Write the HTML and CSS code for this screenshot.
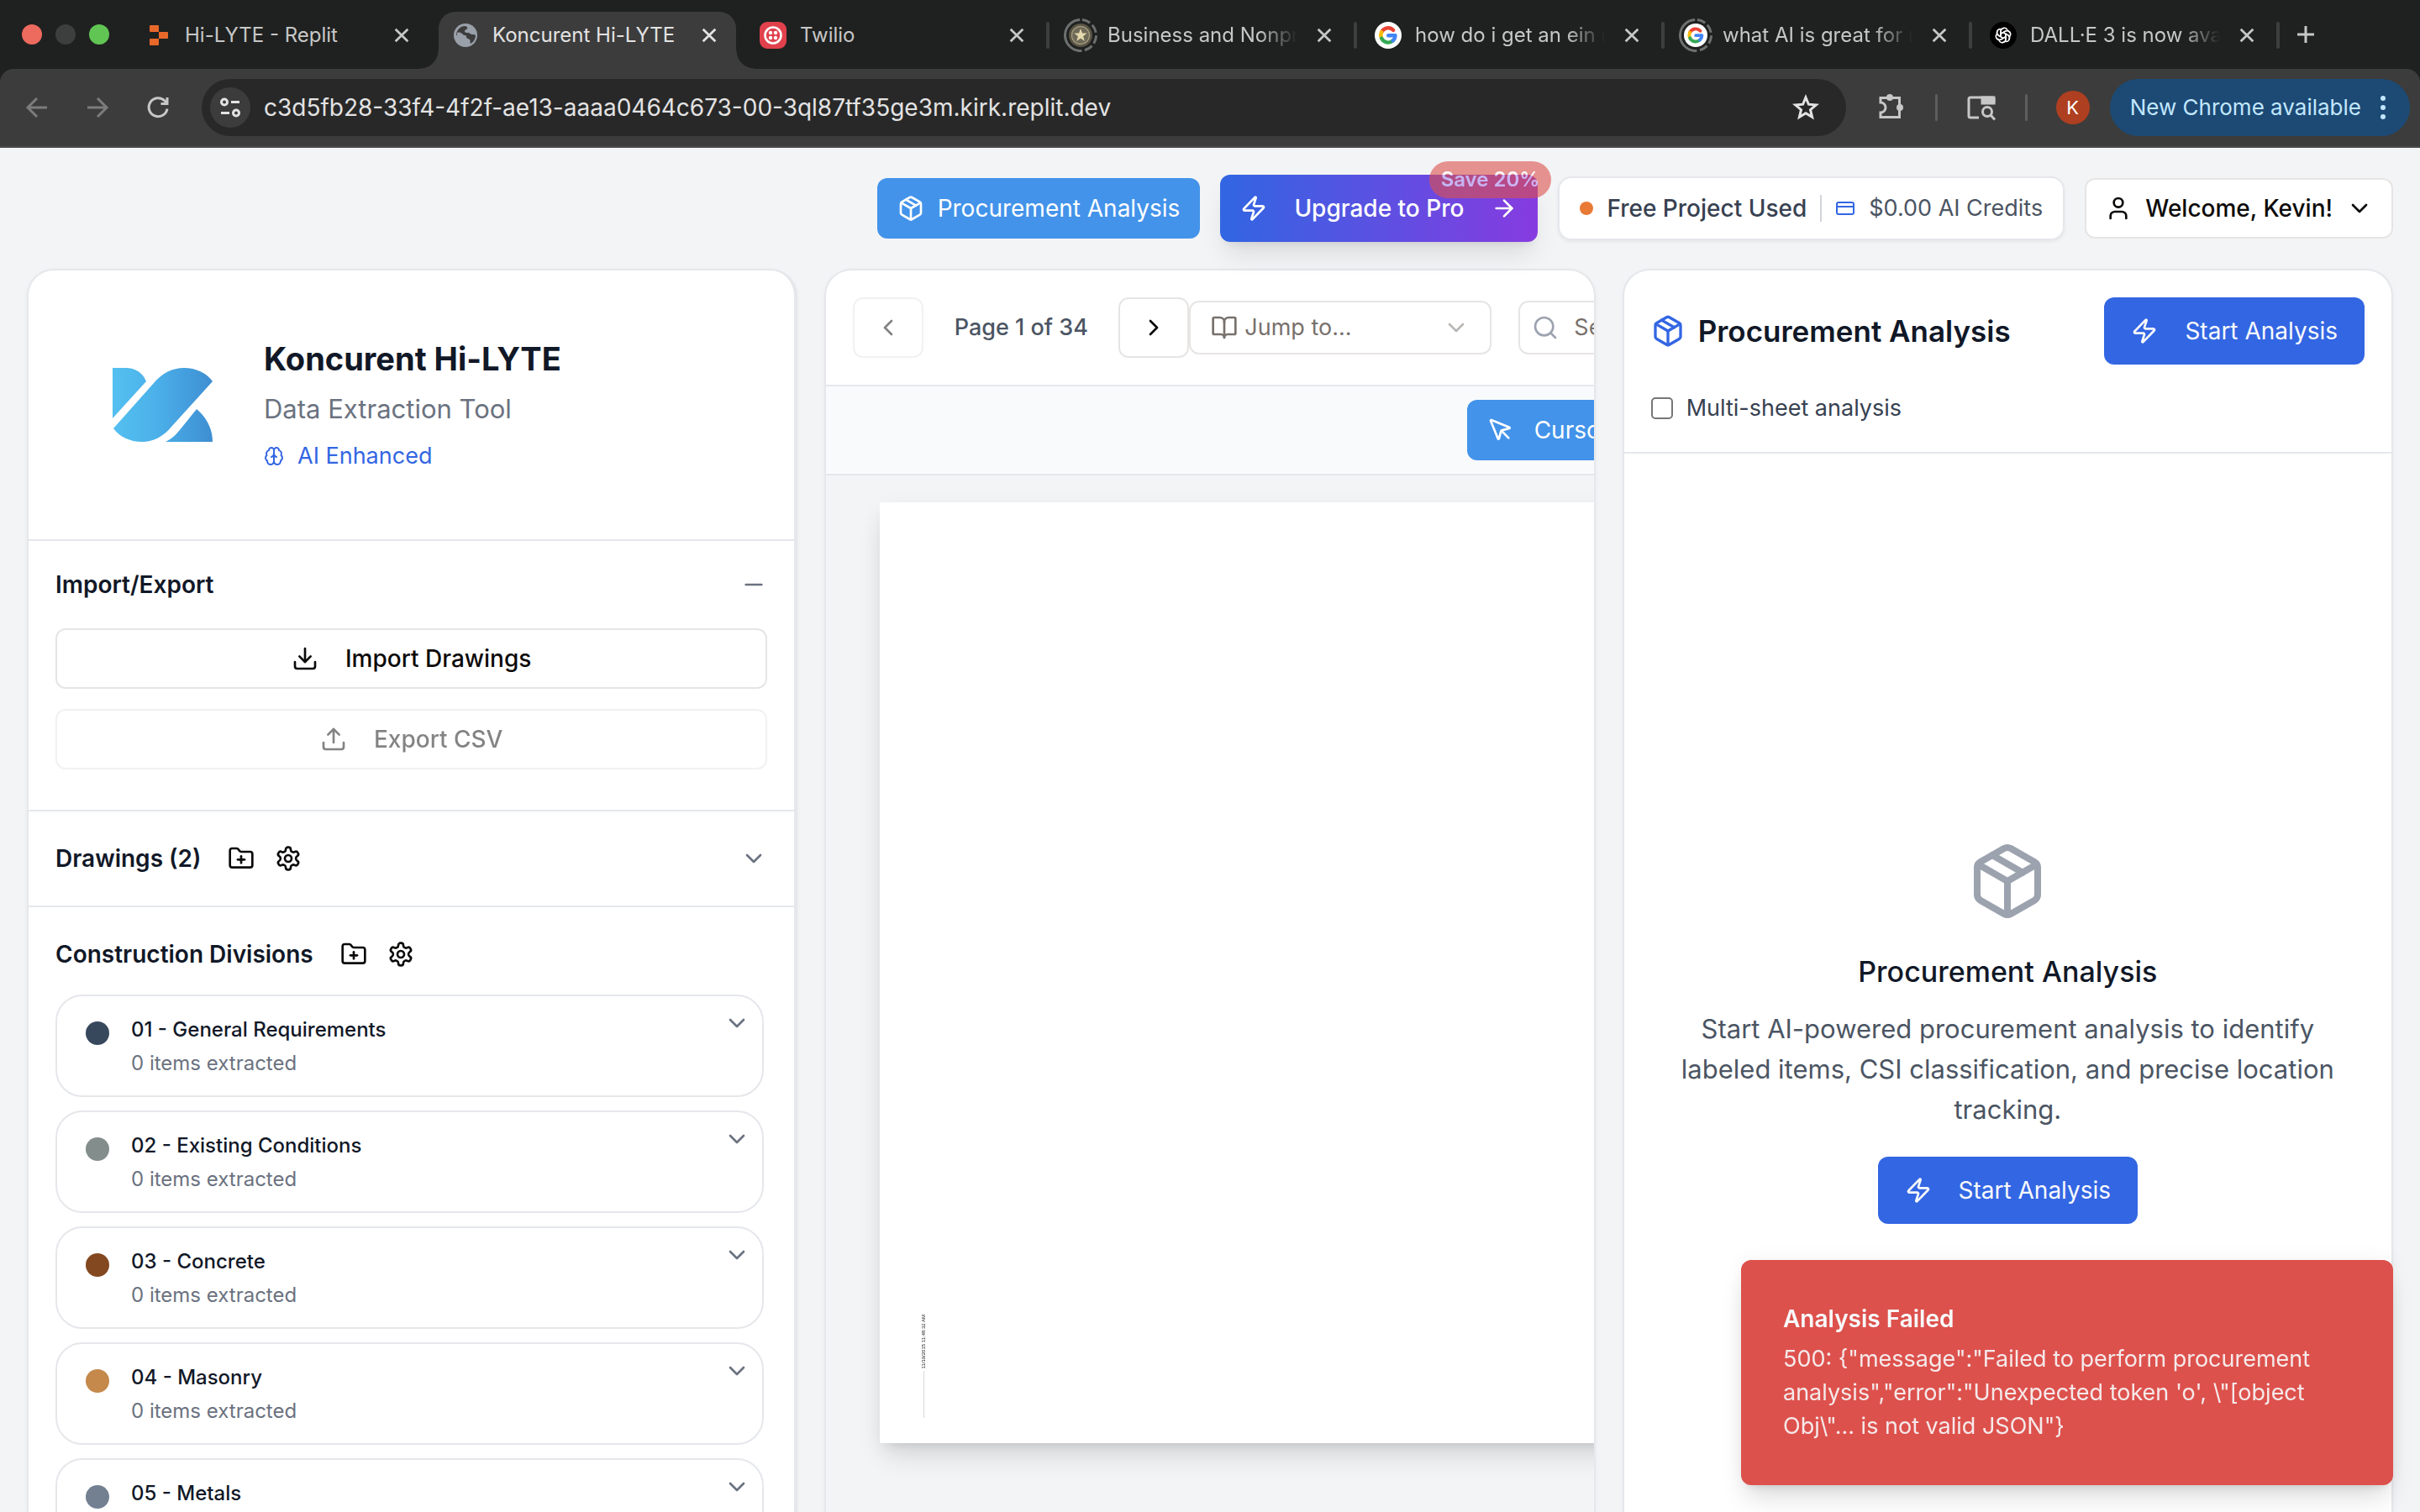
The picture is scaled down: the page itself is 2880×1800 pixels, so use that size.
FILE: index.html
```html
<!DOCTYPE html>
<html lang="en">
<head>
<meta charset="utf-8">
<title>Koncurent Hi-LYTE</title>
<link rel="stylesheet" href="styles.css">
</head>
<body>
<svg class="sprite" aria-hidden="true">
  <symbol id="package" viewBox="0 0 24 24"><path d="M11 21.73a2 2 0 0 0 2 0l7-4A2 2 0 0 0 21 16V8a2 2 0 0 0-1-1.73l-7-4a2 2 0 0 0-2 0l-7 4A2 2 0 0 0 3 8v8a2 2 0 0 0 1 1.73z"/><path d="M12 22V12"/><path d="m3.3 7 8.7 5 8.7-5"/><path d="m7.5 4.27 9 5.15"/></symbol>
  <symbol id="zap" viewBox="0 0 24 24"><path d="M4 14a1 1 0 0 1-.78-1.63l9.9-10.2a.5.5 0 0 1 .86.46l-1.92 6.02A1 1 0 0 0 13 10h7a1 1 0 0 1 .78 1.63l-9.9 10.2a.5.5 0 0 1-.86-.46l1.92-6.02A1 1 0 0 0 11 14z"/></symbol>
  <symbol id="arrow-right" viewBox="0 0 24 24"><path d="M5 12h14"/><path d="m12 5 7 7-7 7"/></symbol>
  <symbol id="card" viewBox="0 0 24 24"><rect width="20" height="14" x="2" y="5" rx="2"/><path d="M2 10h20"/></symbol>
  <symbol id="user" viewBox="0 0 24 24"><path d="M19 21v-2a4 4 0 0 0-4-4H9a4 4 0 0 0-4 4v2"/><circle cx="12" cy="7" r="4"/></symbol>
  <symbol id="chevron-down" viewBox="0 0 24 24"><path d="m6 9 6 6 6-6"/></symbol>
  <symbol id="chevron-left" viewBox="0 0 24 24"><path d="m15 18-6-6 6-6"/></symbol>
  <symbol id="chevron-right" viewBox="0 0 24 24"><path d="m9 18 6-6-6-6"/></symbol>
  <symbol id="minus" viewBox="0 0 24 24"><path d="M5 12h14"/></symbol>
  <symbol id="download" viewBox="0 0 24 24"><path d="M21 15v4a2 2 0 0 1-2 2H5a2 2 0 0 1-2-2v-4"/><path d="m7 10 5 5 5-5"/><path d="M12 15V3"/></symbol>
  <symbol id="upload" viewBox="0 0 24 24"><path d="M21 15v4a2 2 0 0 1-2 2H5a2 2 0 0 1-2-2v-4"/><path d="m17 8-5-5-5 5"/><path d="M12 3v12"/></symbol>
  <symbol id="folder-plus" viewBox="0 0 24 24"><path d="M12 10v6"/><path d="M9 13h6"/><path d="M20 20a2 2 0 0 0 2-2V8a2 2 0 0 0-2-2h-7.9a2 2 0 0 1-1.69-.9L9.6 3.9A2 2 0 0 0 7.93 3H4a2 2 0 0 0-2 2v13a2 2 0 0 0 2 2Z"/></symbol>
  <symbol id="settings" viewBox="0 0 24 24"><path d="M12.22 2h-.44a2 2 0 0 0-2 2v.18a2 2 0 0 1-1 1.73l-.43.25a2 2 0 0 1-2 0l-.15-.08a2 2 0 0 0-2.73.73l-.22.38a2 2 0 0 0 .73 2.73l.15.1a2 2 0 0 1 1 1.72v.51a2 2 0 0 1-1 1.74l-.15.09a2 2 0 0 0-.73 2.73l.22.38a2 2 0 0 0 2.73.73l.15-.08a2 2 0 0 1 2 0l.43.25a2 2 0 0 1 1 1.73V20a2 2 0 0 0 2 2h.44a2 2 0 0 0 2-2v-.18a2 2 0 0 1 1-1.73l.43-.25a2 2 0 0 1 2 0l.15.08a2 2 0 0 0 2.73-.73l.22-.39a2 2 0 0 0-.73-2.73l-.15-.08a2 2 0 0 1-1-1.74v-.5a2 2 0 0 1 1-1.74l.15-.09a2 2 0 0 0 .73-2.73l-.22-.38a2 2 0 0 0-2.73-.73l-.15.08a2 2 0 0 1-2 0l-.43-.25a2 2 0 0 1-1-1.73V4a2 2 0 0 0-2-2z"/><circle cx="12" cy="12" r="3"/></symbol>
  <symbol id="brain" viewBox="0 0 24 24"><path d="M12 5a3 3 0 1 0-5.997.125 4 4 0 0 0-2.526 5.77 4 4 0 0 0 .556 6.588A4 4 0 1 0 12 18Z"/><path d="M12 5a3 3 0 1 1 5.997.125 4 4 0 0 1 2.526 5.77 4 4 0 0 1-.556 6.588A4 4 0 1 1 12 18Z"/><path d="M15 13a4.5 4.5 0 0 1-3-4 4.5 4.5 0 0 1-3 4"/></symbol>
  <symbol id="book" viewBox="0 0 24 24"><path d="M12 7v14"/><path d="M3 18a1 1 0 0 1-1-1V4a1 1 0 0 1 1-1h5a4 4 0 0 1 4 4 4 4 0 0 1 4-4h5a1 1 0 0 1 1 1v13a1 1 0 0 1-1 1h-6a3 3 0 0 0-3 3 3 3 0 0 0-3-3z"/></symbol>
  <symbol id="search" viewBox="0 0 24 24"><circle cx="11" cy="11" r="8"/><path d="m21 21-4.3-4.3"/></symbol>
  <symbol id="pointer" viewBox="0 0 24 24"><path d="M12.586 12.586 19 19"/><path d="M3.688 3.037a.497.497 0 0 0-.651.651l6.5 15.999a.501.501 0 0 0 .947-.062l1.569-6.083a2 2 0 0 1 1.448-1.479l6.124-1.579a.5.5 0 0 0 .063-.947z"/></symbol>
  <symbol id="close" viewBox="0 0 24 24"><path d="m4 4 16 16M20 4 4 20"/></symbol>
  <symbol id="google" viewBox="0 0 32 32"><circle cx="16" cy="16" r="16" fill="#fff" stroke="none"/><g fill="none" stroke-width="4.4"><path stroke="#ea4335" d="M8.2 12.2A8.6 8.6 0 0 1 22.2 10"/><path stroke="#fbbc05" d="M8.2 19.8a8.6 8.6 0 0 1 0-7.6"/><path stroke="#34a853" d="M21.6 22.4a8.6 8.6 0 0 1-13.4-2.6"/><path stroke="#4285f4" d="M16.2 16.2h8.3a8.6 8.6 0 0 1-2.9 6.2"/></g></symbol>
  <symbol id="sleep-ring" viewBox="0 0 40 40"><circle cx="20" cy="20" r="18.5" fill="none" stroke="#6d706f" stroke-width="3" stroke-linecap="butt" stroke-dasharray="10 3.6 10 3.6 10 3.6 10 3.6 58.2 3.6" transform="rotate(-84 20 20)"/></symbol>
</svg>

<div class="browser">
  <nav class="tabstrip" aria-label="Tabs">
    <div class="lights"><i class="light light-red"></i><i class="light light-grey"></i><i class="light light-green"></i></div>
    <div class="tab">
      <svg class="favicon" viewBox="0 0 32 32"><path fill="#e8682a" d="M7 4h9a1 1 0 0 1 1 1v7H7a1 1 0 0 1-1-1V5a1 1 0 0 1 1-1zM17 12h10a1 1 0 0 1 1 1v6a1 1 0 0 1-1 1H17zM7 20h10v7a1 1 0 0 1-1 1H7a1 1 0 0 1-1-1v-6a1 1 0 0 1 1-1z"/></svg>
      <button class="tab-title">Hi-LYTE - Replit</button>
      <button class="tab-close" aria-label="Close tab"><svg class="i22"><use href="#close"/></svg></button>
    </div>
    <div class="tab tab-active">
      <svg class="favicon" viewBox="0 0 32 32"><circle cx="16" cy="16" r="14" fill="#9aa0a9"/><path fill="#3c3c3c" d="M14 5c3 0 5 1 4 3s-3 1-3 3 2 2 4 2 3 2 5 2 3 0 4 1a12 12 0 0 1-6 10c-1-1 0-4-1-5s-4-1-4-3-1-2-3-2H5a11 11 0 0 1 9-11z"/><path fill="#9aa0a9" d="M6 13c3-1 5 0 7 2s3 2 3 4-3 2-3 5l-1 4-6-6z"/></svg>
      <button class="tab-title">Koncurent Hi-LYTE</button>
      <button class="tab-close" aria-label="Close tab"><svg class="i22"><use href="#close"/></svg></button>
    </div>
    <div class="tab">
      <svg class="favicon" viewBox="0 0 32 32"><rect width="32" height="32" rx="9" fill="#e0414c"/><circle cx="16" cy="16" r="9.5" fill="none" stroke="#fff" stroke-width="2.6"/><g fill="#fff"><circle cx="13" cy="13" r="2.2"/><circle cx="19" cy="13" r="2.2"/><circle cx="13" cy="19" r="2.2"/><circle cx="19" cy="19" r="2.2"/></g></svg>
      <button class="tab-title">Twilio</button>
      <button class="tab-close" aria-label="Close tab"><svg class="i22"><use href="#close"/></svg></button>
    </div>
    <div class="tab tab-divided">
      <span class="favicon favicon-asleep"><svg class="ring"><use href="#sleep-ring"/></svg><svg class="i28" viewBox="0 0 28 28"><circle cx="14" cy="14" r="14" fill="#595445"/><circle cx="14" cy="14" r="10.5" fill="#6f6a58" stroke="#a49c80" stroke-width="1.5" stroke-dasharray="2 1.4"/><path fill="#e4d9ac" d="m14 6 2 5.600h5.600l-4.500 3.600 1.700 5.800-4.800-3.500L9.200 21l1.700-5.800-4.500-3.600H12z"/></svg></span>
      <button class="tab-title">Business and Nonprofit</button>
      <button class="tab-close" aria-label="Close tab"><svg class="i22"><use href="#close"/></svg></button>
    </div>
    <div class="tab tab-divided">
      <svg class="favicon"><use href="#google"/></svg>
      <button class="tab-title">how do i get an ein n</button>
      <button class="tab-close" aria-label="Close tab"><svg class="i22"><use href="#close"/></svg></button>
    </div>
    <div class="tab tab-divided">
      <span class="favicon favicon-asleep"><svg class="ring"><use href="#sleep-ring"/></svg><svg class="i28"><use href="#google"/></svg></span>
      <button class="tab-title">what AI is great for m</button>
      <button class="tab-close" aria-label="Close tab"><svg class="i22"><use href="#close"/></svg></button>
    </div>
    <div class="tab tab-divided">
      <svg class="favicon" viewBox="0 0 32 32"><circle cx="16" cy="16" r="16" fill="#000"/><g fill="none" stroke="#fff" stroke-width="1.5"><path id="petal" d="M13 17.600v-6.100a4.200 4.200 0 0 1 7.800-2.100M13 14.300l5.400-3.100a4.200 4.200 0 0 1 5.500 1.300"/><use href="#petal" transform="rotate(60 16 16)"/><use href="#petal" transform="rotate(120 16 16)"/><use href="#petal" transform="rotate(180 16 16)"/><use href="#petal" transform="rotate(240 16 16)"/><use href="#petal" transform="rotate(300 16 16)"/></g></svg>
      <button class="tab-title">DALL·E 3 is now available</button>
      <button class="tab-close" aria-label="Close tab"><svg class="i22"><use href="#close"/></svg></button>
    </div>
    <div class="tab-divided new-tab"><button class="tab-close" aria-label="New tab"><svg class="i24" viewBox="0 0 24 24"><path d="M12 2v20M2 12h20"/></svg></button></div>
  </nav>

  <div class="toolbar">
    <div class="nav-buttons">
      <button class="nav-off" aria-label="Back"><svg class="i32" viewBox="0 0 32 32"><path d="M28 16H5M16 5 5 16l11 11"/></svg></button>
      <button class="nav-off" aria-label="Forward"><svg class="i32" viewBox="0 0 32 32"><path d="M4 16h23M16 5l11 11-11 11"/></svg></button>
      <button aria-label="Reload"><svg class="i32" viewBox="0 0 32 32"><path d="M27 17.500A11 11 0 1 1 24 8l3 3M27 4v7.500h-7.500"/></svg></button>
    </div>
    <div class="omnibox">
      <button class="site-info" aria-label="Site information"><svg class="i32" viewBox="0 0 32 32"><circle cx="9" cy="9.500" r="3.500"/><path d="M17 9.500h10M5 22.500h10"/><circle cx="23" cy="22.500" r="3.500"/></svg></button>
      <input class="url" aria-label="Address" value="c3d5fb28-33f4-4f2f-ae13-aaaa0464c673-00-3ql87tf35ge3m.kirk.replit.dev">
      <button aria-label="Bookmark"><svg class="i32" viewBox="0 0 32 32"><path d="m16 4 3.400 8.200 8.900.700-6.800 5.800 2.100 8.700L16 22.800l-7.600 4.600 2.100-8.700-6.800-5.800 8.900-.700z"/></svg></button>
    </div>
    <div class="extensions">
      <button aria-label="Extensions"><svg class="i36" viewBox="0 0 36 36"><path d="M5 6.500h22.500v23H5v-5.500a6 6 0 0 0 0-12z"/><g fill="currentColor" stroke="none"><circle cx="16" cy="6" r="4"/><circle cx="28" cy="18" r="4"/></g></svg></button>
      <i class="bar-sep"></i>
      <button aria-label="Search tabs"><svg class="i36" viewBox="0 0 36 36"><path d="M15 30H5a2 2 0 0 1-2-2V8a2 2 0 0 1 2-2h26a2 2 0 0 1 2 2v5"/><path d="M19 6h14v7H19z" fill="currentColor"/><circle cx="25" cy="23" r="5.500"/><path d="m29 27 5 5.500"/></svg></button>
      <i class="bar-sep"></i>
      <button class="avatar" aria-label="Profile">K</button>
    </div>
    <button class="update">New Chrome available<svg class="dots" viewBox="0 0 8 32"><circle cx="4" cy="5" r="3"/><circle cx="4" cy="16" r="3"/><circle cx="4" cy="27" r="3"/></svg></button>
  </div>
</div>

<header class="app-header">
  <button class="btn btn-sky"><svg class="i32"><use href="#package"/></svg>Procurement Analysis</button>
  <button class="btn btn-upgrade"><svg class="i32"><use href="#zap"/></svg>Upgrade to Pro<svg class="i32"><use href="#arrow-right"/></svg><span class="save">Save 20%</span></button>
  <div class="status">
    <i class="status-dot"></i><span class="status-plan">Free Project Used</span><i class="status-sep"></i>
    <svg class="i24 blue"><use href="#card"/></svg><span>$0.00 AI Credits</span>
  </div>
  <button class="btn btn-outline account"><svg class="i32"><use href="#user"/></svg>Welcome, Kevin!<svg class="i32"><use href="#chevron-down"/></svg></button>
</header>

<main class="workspace">
  <aside class="panel side">
    <div class="brand">
      <svg class="brand-logo" viewBox="0 0 216 216"><defs><linearGradient id="logo" gradientUnits="userSpaceOnUse" x1="68" y1="0" x2="187" y2="0"><stop offset="0" stop-color="#54c0f0"/><stop offset=".45" stop-color="#4bb0e9"/><stop offset="1" stop-color="#3e8ed2"/></linearGradient></defs><g fill="url(#logo)"><path d="M68 64h16c11 0 20 6 24 16L68 124z"/><path d="m69 136 48-54c10-12 22-18 36-18 14 0 27 6 34 16l-49 54c-9 11-21 18-35 18-14 0-27-6-34-16z"/><path d="M168 113c12 10 19 24 19 39h-56c6-3 11-7 16-13z"/></g></svg>
      <div class="brand-text">
        <h1>Koncurent Hi-LYTE</h1>
        <p class="tagline">Data Extraction Tool</p>
        <p class="ai"><svg class="i24"><use href="#brain"/></svg>AI Enhanced</p>
      </div>
    </div>
    <section class="section import">
      <div class="section-head"><h2>Import/Export</h2><button class="toggle" aria-label="Collapse"><svg class="i32"><use href="#minus"/></svg></button></div>
      <button class="btn btn-outline wide"><svg class="i32"><use href="#download"/></svg>Import Drawings</button>
      <button class="btn btn-outline wide" disabled><svg class="i32"><use href="#upload"/></svg>Export CSV</button>
    </section>
    <section class="section drawings">
      <div class="section-head"><h2>Drawings (2)</h2><button aria-label="Add folder"><svg class="i32"><use href="#folder-plus"/></svg></button><button aria-label="Settings"><svg class="i32"><use href="#settings"/></svg></button><button class="toggle" aria-label="Expand"><svg class="i32"><use href="#chevron-down"/></svg></button></div>
    </section>
    <section class="section divisions">
      <div class="section-head"><h2>Construction Divisions</h2><button aria-label="Add folder"><svg class="i32"><use href="#folder-plus"/></svg></button><button aria-label="Settings"><svg class="i32"><use href="#settings"/></svg></button></div>
      <ul class="division-list">
        <li class="division"><i class="swatch navy"></i><div class="division-text"><h3>01 - General Requirements</h3><p>0 items extracted</p></div><button class="toggle" aria-label="Expand"><svg class="i32"><use href="#chevron-down"/></svg></button></li>
        <li class="division"><i class="swatch grey"></i><div class="division-text"><h3>02 - Existing Conditions</h3><p>0 items extracted</p></div><button class="toggle" aria-label="Expand"><svg class="i32"><use href="#chevron-down"/></svg></button></li>
        <li class="division"><i class="swatch brown"></i><div class="division-text"><h3>03 - Concrete</h3><p>0 items extracted</p></div><button class="toggle" aria-label="Expand"><svg class="i32"><use href="#chevron-down"/></svg></button></li>
        <li class="division"><i class="swatch tan"></i><div class="division-text"><h3>04 - Masonry</h3><p>0 items extracted</p></div><button class="toggle" aria-label="Expand"><svg class="i32"><use href="#chevron-down"/></svg></button></li>
        <li class="division"><i class="swatch slate"></i><div class="division-text"><h3>05 - Metals</h3><p>0 items extracted</p></div><button class="toggle" aria-label="Expand"><svg class="i32"><use href="#chevron-down"/></svg></button></li>
      </ul>
    </section>
  </aside>

  <section class="panel viewer">
    <div class="pager">
      <button class="btn btn-outline step" aria-label="Previous page" disabled><svg class="i32"><use href="#chevron-left"/></svg></button>
      <span class="page-count">Page 1 of 34</span>
      <button class="btn btn-outline step" aria-label="Next page"><svg class="i32"><use href="#chevron-right"/></svg></button>
      <div class="field jump"><svg class="i32"><use href="#book"/></svg><select aria-label="Jump to page"><option>Jump to...</option></select><svg class="i32 faint"><use href="#chevron-down"/></svg></div>
      <div class="field find"><svg class="i32"><use href="#search"/></svg><input type="search" aria-label="Search" placeholder="Search"></div>
    </div>
    <div class="tools"><button class="btn btn-sky tool"><svg class="i32"><use href="#pointer"/></svg>Cursor</button></div>
    <div class="canvas">
      <div class="sheet"><span class="stamp">11/19/2015 11:48:32 AM</span><i class="stamp-line"></i></div>
    </div>
  </section>

  <section class="panel analysis">
    <div class="analysis-head">
      <div class="analysis-row">
        <h2><svg class="i40 blue"><use href="#package"/></svg>Procurement Analysis</h2>
        <button class="btn btn-blue"><svg class="i32"><use href="#zap"/></svg>Start Analysis</button>
      </div>
      <label class="check"><input type="checkbox">Multi-sheet analysis</label>
    </div>
    <div class="empty">
      <svg class="i96"><use href="#package"/></svg>
      <h3>Procurement Analysis</h3>
      <p>Start AI-powered procurement analysis to identify labeled items, CSI classification, and precise location tracking.</p>
      <button class="btn btn-blue"><svg class="i32"><use href="#zap"/></svg>Start Analysis</button>
    </div>
  </section>
</main>

<div class="toast" role="alert">
  <strong>Analysis Failed</strong>
  <p>500: {"message":"Failed to perform procurement analysis","error":"Unexpected token 'o', \"[object Obj\"... is not valid JSON"}</p>
</div>
</body>
</html>
```
FILE: styles.css
```css
*, *::before, *::after { box-sizing: border-box; }
html, body { height: 100%; }
body {
  margin: 0;
  display: flex;
  flex-direction: column;
  overflow: hidden;
  background: #f3f4f6;
  color: #0c0a09;
  font: 400 27px/40px Inter, "Liberation Sans", sans-serif;
}
h1, h2, h3, p, ul { margin: 0; padding: 0; font: inherit; }
ul { list-style: none; }
button, input, select { margin: 0; padding: 0; border: 0; background: none; color: inherit; font: inherit; }
button { display: inline-flex; align-items: center; justify-content: center; white-space: nowrap; }
svg { flex: none; fill: none; stroke: currentColor; stroke-width: 2; stroke-linecap: round; stroke-linejoin: round; }
.sprite { position: absolute; width: 0; height: 0; }
.i22 { width: 22px; height: 22px; }
.i24 { width: 24px; height: 24px; }
.i28 { width: 28px; height: 28px; }
.i32 { width: 32px; height: 32px; }
.i36 { width: 36px; height: 36px; }
.i40 { width: 40px; height: 40px; }
.i96 { width: 96px; height: 96px; }
.blue { color: #3366e3; }

/* Browser window */
.browser { flex: none; background: #1f2120; color: #c7c7c7; }
.tabstrip { display: flex; height: 82px; font-size: 24px; line-height: 32px; }
.lights { display: flex; align-items: center; gap: 16px; width: 150px; padding-left: 26px; }
.light { width: 24px; height: 24px; border-radius: 50%; }
.light-red { background: #ed6a5e; }
.light-grey { background: #3d3f3e; }
.light-green { background: #61c554; }
.tab { position: relative; display: flex; align-items: center; gap: 16px; width: 366px; padding: 2px 27px 0 22px; }
.tab-divided::before { content: ""; position: absolute; left: -3px; top: 26px; width: 4px; height: 32px; border-radius: 2px; background: #3c3f3d; }
.tab-active { z-index: 0; color: #e3e3e3; }
.tab-active::before { content: ""; position: absolute; z-index: -1; inset: 14px 6px 0; border-radius: 20px 20px 0 0; background: #3c3c3c; }
.tab-active::after {
  content: ""; position: absolute; z-index: -1; left: -16px; right: -16px; bottom: 0; height: 22px;
  background:
    radial-gradient(circle at 0 0, transparent 21px, #3c3c3c 22px) left / 22px 22px no-repeat,
    radial-gradient(circle at 100% 0, transparent 21px, #3c3c3c 22px) right / 22px 22px no-repeat;
}
.favicon { position: relative; flex: none; width: 32px; height: 32px; stroke: none; }
.favicon-asleep { display: grid; place-items: center; }
.ring { position: absolute; left: -4px; top: -4px; width: 40px; height: 40px; }
.favicon-asleep svg { stroke: none; }
.tab-title { flex: 1; min-width: 0; display: block; overflow: hidden; text-align: left; }
.tab-divided .tab-title {
  -webkit-mask-image: linear-gradient(to right, #000 180px, transparent 226px);
  mask-image: linear-gradient(to right, #000 180px, transparent 226px);
}
.tab-close svg { stroke-width: 3; stroke-linecap: butt; }
.new-tab { position: relative; display: flex; align-items: center; padding-left: 20px; }
.toolbar {
  display: flex; align-items: center; height: 94px; padding: 0 12px 0 28px;
  border-bottom: 2px solid #4a4a4a; border-radius: 16px 16px 0 0; background: #3c3c3c;
}
.toolbar svg { stroke-width: 3; stroke-linecap: butt; stroke-linejoin: miter; }
.nav-buttons { display: flex; gap: 40px; width: 212px; }
.nav-off { color: #7c7c7c; }
.omnibox { flex: 1; display: flex; align-items: center; height: 68px; padding: 0 32px 0 10px; border-radius: 34px; background: #282828; color: #e3e3e3; }
.site-info { width: 48px; height: 48px; border-radius: 50%; background: #3c3c3c; }
.url { flex: 1; min-width: 0; margin-left: 16px; outline: 0; font-size: 28px; }
.extensions { display: flex; align-items: center; gap: 34px; padding: 0 24px 0 36px; }
.bar-sep { width: 3px; height: 32px; border-radius: 2px; background: #5e5e5e; }
.avatar { width: 40px; height: 40px; border-radius: 50%; background: #ae3f20; color: #fff; font-size: 22px; }
.toolbar .update { gap: 22px; height: 68px; padding: 0 28px 0 24px; border-radius: 34px; background: #1c4a75; color: #c2e7ff; font-size: 26px; }
.toolbar .dots { width: 8px; height: 32px; fill: currentColor; stroke: none; }

/* Buttons */
.btn { gap: 16px; height: 72px; padding: 0 24px; border-radius: 12px; font-size: 28px; font-weight: 500; }
.btn:disabled { opacity: .5; }
.btn-sky { background: #4393ea; color: #fff; font-weight: 400; }
.btn-outline { border: 2px solid #e7e5e4; background: #fff; }
.btn-blue { gap: 32px; height: 80px; padding: 0 32px; background: #3366e3; color: #f8fafc; font-weight: 400; }
.btn-upgrade {
  position: relative; gap: 32px; height: 80px; color: #fff;
  background: linear-gradient(to right, #3166e3, #873be0);
  box-shadow: 0 20px 30px -6px rgba(0, 0, 0, .1), 0 8px 12px -8px rgba(0, 0, 0, .1);
}
.save { position: absolute; right: -16px; top: -16px; padding: 6px 14px; border-radius: 22px; background: #dd514c; color: #fff; font-size: 24px; line-height: 32px; font-weight: 600; opacity: .6; }
.account { padding: 0 22px; }

/* App header */
.app-header { flex: none; display: flex; align-items: center; justify-content: flex-end; gap: 24px; padding: 32px; }
.status { display: flex; align-items: center; gap: 16px; padding: 16px 24px; border: 2px solid #e5e7eb; border-radius: 16px; background: #fff; color: #4b5563; box-shadow: 0 2px 4px rgba(0, 0, 0, .06); white-space: nowrap; }
.status-dot { width: 16px; height: 16px; border-radius: 50%; background: #e87a35; }
.status-plan { color: #374151; font-size: 28px; font-weight: 500; }
.status-sep { width: 2px; height: 32px; background: #d1d5db; }

/* Workspace */
.workspace { flex: 1; min-height: 0; display: grid; grid-template-columns: repeat(3, minmax(0, 1fr)); gap: 32px; padding: 0 32px; }
.panel { display: flex; flex-direction: column; min-height: 0; overflow: hidden; border: 2px solid #e5e7eb; border-bottom: 0; border-radius: 32px 32px 0 0; background: #fff; box-shadow: 0 2px 6px rgba(0, 0, 0, .04); }
.side { border-right-width: 4px; color: #111827; }
.brand { flex: none; display: flex; align-items: center; gap: 32px; height: 320px; padding: 0 32px; }
.brand-logo { width: 216px; height: 216px; stroke: none; }
.brand-text { display: flex; flex-direction: column; gap: 8px; padding-bottom: 2px; }
.brand h1 { font-size: 38px; line-height: 56px; font-weight: 700; }
.tagline { color: #6b7280; font-size: 31px; line-height: 48px; }
.ai { display: flex; align-items: center; gap: 16px; margin-top: 4px; color: #3366e3; }
.section { flex: none; padding: 32px; border-top: 2px solid #e5e7eb; }
.section-head { display: flex; align-items: center; gap: 24px; }
.section-head h2 { margin-right: 8px; font-size: 28px; font-weight: 600; }
.section-head button { color: #0c0a09; }
.section-head .toggle, .toggle { margin-left: auto; color: #6b7280; }
.import { display: flex; flex-direction: column; gap: 24px; padding-bottom: 48px; }
.import .section-head { margin-bottom: 8px; }
.wide { gap: 32px; color: #0c0a09; }
.drawings { padding: 36px 32px; }
.divisions { padding-top: 36px; }
.division-list { display: flex; flex-direction: column; gap: 16px; margin-top: 28px; padding-right: 4px; }
.division { display: flex; height: 122px; padding: 22px 14px 22px 34px; border: 2px solid #e5e7eb; border-radius: 32px; font-size: 24px; line-height: 36px; }
.division h3 { font-weight: 500; }
.division p { margin-top: 4px; color: #6b7280; }
.division .toggle { align-self: flex-start; margin-top: -6px; }
.swatch { width: 28px; height: 28px; margin: 8px 26px 0 0; border-radius: 50%; }
.navy { background: #37485c; }
.grey { background: #828d8c; }
.brown { background: #83481f; }
.tan { background: #c4894b; }
.slate { background: #738092; }

/* Drawing viewer */
.pager { flex: none; display: flex; align-items: center; height: 136px; padding-left: 32px; color: #4b5563; }
.step { flex: none; width: 84px; padding: 0; color: #0c0a09; }
.page-count { flex: none; width: 232px; text-align: center; font-weight: 500; }
.field { flex: none; display: flex; align-items: center; height: 64px; border: 2px solid #e7e5e4; border-radius: 12px; color: #78716c; }
.jump { width: 360px; padding: 0 24px; gap: 8px; }
.jump select { flex: 1; min-width: 0; appearance: none; }
.faint { opacity: .5; }
.find { width: 384px; margin-left: 32px; padding-left: 14px; gap: 18px; }
.find svg { color: #9ca3af; }
.find input::placeholder { color: #78716c; opacity: 1; }
.tools { flex: none; display: flex; padding: 16px 0 16px calc(100% - 151px); border: solid #e5e7eb; border-width: 2px 0; background: #f8fafc; }
.tool { flex: none; gap: 24px; }
.canvas { flex: 1; min-height: 0; padding: 32px 0 0 64px; background: #f3f4f6; }
.sheet { display: flex; flex-direction: column; justify-content: flex-end; align-items: flex-start; width: 1600px; height: 1120px; padding: 0 0 30px 48px; background: #fff; box-shadow: 0 20px 30px -6px rgba(0, 0, 0, .12), 0 8px 12px -8px rgba(0, 0, 0, .1), 0 4px 24px rgba(0, 0, 0, .04); }
.stamp { writing-mode: vertical-rl; transform: rotate(180deg); font: 6px/8px "Liberation Sans", sans-serif; color: #222; }
.stamp-line { width: 1px; height: 56px; margin: 3px 0 0 4px; background: #d8d8d8; }

/* Procurement analysis */
.analysis-head { flex: none; display: flex; flex-direction: column; gap: 32px; padding: 32px; border-bottom: 2px solid #e5e7eb; }
.analysis-row { display: flex; align-items: center; justify-content: space-between; }
.analysis-row h2 { display: flex; align-items: center; gap: 16px; color: #111827; font-size: 35px; line-height: 56px; font-weight: 600; }
.check { display: flex; align-items: center; gap: 16px; color: #374151; }
.check input { appearance: none; width: 26px; height: 26px; border: 2px solid #767676; border-radius: 5px; background: #fff; }
.empty { display: flex; flex: none; flex-direction: column; align-items: center; padding: 461px 64px 0; text-align: center; }
.empty .i96 { color: #9ca3af; }
.empty h3 { margin-top: 32px; color: #111827; font-size: 34px; line-height: 56px; font-weight: 500; }
.empty p { margin: 16px 0 32px; color: #4b5563; font-size: 31px; line-height: 48px; }

/* Toast */
.toast { position: fixed; right: 32px; bottom: 32px; width: 776px; padding: 48px 64px 48px 48px; border: 2px solid #dd514c; border-radius: 12px; background: #dd514c; color: #f8fafc; box-shadow: 0 20px 30px -6px rgba(0, 0, 0, .14), 0 8px 12px -8px rgba(0, 0, 0, .12), 0 0 24px rgba(0, 0, 0, .05); }
.toast strong { display: block; font-size: 28px; font-weight: 600; }
.toast p { margin-top: 8px; opacity: .9; }
```
